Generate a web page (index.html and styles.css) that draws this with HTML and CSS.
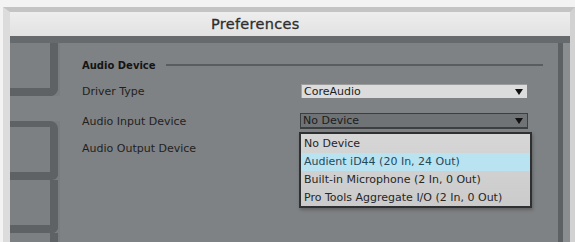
FILE: index.html
```html
<!DOCTYPE html>
<html>
<head>
<meta charset="utf-8">
<link rel="stylesheet" href="styles.css">
</head>
<body>
<div class="window">
  <div class="titlebar">Preferences</div>
  <div class="band"></div>
  <div class="main">
    <div class="tabs">
      <div class="tab tab1"></div>
      <div class="tab-gap"></div>
      <div class="tab tab2"></div>
      <div class="tab tab3"></div>
      <div class="tab tab4"></div>
    </div>
    <div class="panel">
      <div class="heading"><span>Audio Device</span><div class="rule"></div></div>
      <div class="row row1">
        <div class="label">Driver Type</div>
        <div class="select light"><span>CoreAudio</span><i class="tri"></i></div>
      </div>
      <div class="row row2">
        <div class="label">Audio Input Device</div>
        <div class="select dark"><span>No Device</span><i class="tri"></i>
          <div class="list">
            <div class="item">No Device</div>
            <div class="item sel">Audient iD44 (20 In, 24 Out)</div>
            <div class="item">Built-in Microphone (2 In, 0 Out)</div>
            <div class="item">Pro Tools Aggregate I/O (2 In, 0 Out)</div>
          </div>
        </div>
      </div>
      <div class="row row3">
        <div class="label">Audio Output Device</div>
      </div>
    </div>
    <div class="edge"></div>
    <div class="edge2"></div>
  </div>
</div>
</body>
</html>
```

FILE: styles.css
```css
* { box-sizing: border-box; }
html, body { margin: 0; padding: 0; }
body {
  width: 575px;
  height: 242px;
  overflow: hidden;
  background: #f3f3f3;
  font-family: "DejaVu Sans", sans-serif;
  font-size: 11px;
  color: #1b1b1b;
}
.window {
  margin: 7px 0 0 3px;
  height: 235px;
  border-top: 5px solid #c4c4c4;
  border-left: 7px solid #dcdcdc;
  border-right: 5px solid #d2d2d2;
  background: #7f8284;
  display: flex;
  flex-direction: column;
}
.titlebar {
  height: 24px;
  flex: none;
  background: linear-gradient(#eeeeee, #e2e2e2);
  color: #2e2e2e;
  font-size: 14.5px;
  line-height: 24px;
  padding-left: 201px;
  letter-spacing: 0.3px;
  -webkit-text-stroke: 0.3px #2e2e2e;
}
.band {
  height: 7px;
  flex: none;
  background: #666a6c;
}
.main {
  flex: 1;
  display: flex;
  min-height: 0;
}
.tabs {
  width: 50px;
  flex: none;
  display: flex;
  flex-direction: column;
  background: #7a7d7f;
}
.tab {
  width: 48px;
  background: #7d8082;
  border-right: 8px solid #5f6264;
  flex: none;
}
.tab1 {
  height: 53px;
  border-bottom: 8px solid #5f6264;
  border-bottom-right-radius: 8px;
}
.tab-gap { height: 25px; background: #7f8284; width: 50px; }
.tab2 {
  height: 59px;
  border-top: 6px solid #5f6264;
  border-bottom: 8px solid #5f6264;
  border-top-right-radius: 8px;
  border-bottom-right-radius: 6px;
}
.tab3 {
  height: 53px;
  border-bottom: 8px solid #5f6264;
  border-bottom-right-radius: 6px;
}
.tab4 { flex: 1; }
.panel {
  flex: 1;
  padding: 15px 0 0 22px;
  background: #7f8284;
}
.heading {
  display: flex;
  align-items: center;
  height: 14px;
  font-weight: bold;
  font-size: 10px;
  color: #141414;
}
.rule {
  width: 377px;
  height: 2px;
  margin-left: 10px;
  background: #5a5d5f;
}
.row {
  display: flex;
  align-items: center;
}
.label { width: 218px; flex: none; color: #1f1f1f; }
.row1 { margin-top: 12px; height: 14px; }
.row2 { margin-top: 15px; height: 16px; }
.row3 { margin-top: 12px; height: 14px; }
.select {
  position: relative;
  width: 228px;
  display: flex;
  align-items: center;
  padding-left: 2px;
  color: #1c1c1c;
}
.select.light {
  height: 14px;
  margin-left: 1px;
  width: 226px;
  background: #dcdcdc;
  border-top: 1px solid #9c9c9c;
  border-left: 1px solid #a4a4a4;
}
.select.dark {
  height: 16px;
  background: #707375;
  border: 1px solid #3c3e40;
  border-bottom-width: 2px;
}
.tri {
  position: absolute;
  right: 4px;
  top: 50%;
  margin-top: -3px;
  width: 0;
  height: 0;
  border-left: 4px solid transparent;
  border-right: 4px solid transparent;
  border-top: 6px solid #111;
}
.list {
  position: absolute;
  left: -2px;
  top: 18px;
  width: 233px;
  height: 76px;
  background: linear-gradient(#d6d6d6, #cbcbcb);
  border: 2px solid #2e3032;
  box-shadow: 1px 2px 3px rgba(40,40,40,0.35);
  padding-top: 1px;
  display: flex;
  flex-direction: column;
}
.item {
  height: 18px;
  line-height: 18px;
  padding-left: 3px;
  color: #262626;
  white-space: nowrap;
}
.item.sel {
  background: #b9e3f1;
  color: #1f4a5c;
}
.edge { width: 5px; flex: none; background: #5e6163; }
.edge2 { width: 7px; flex: none; background: #8b8e90; }
```
